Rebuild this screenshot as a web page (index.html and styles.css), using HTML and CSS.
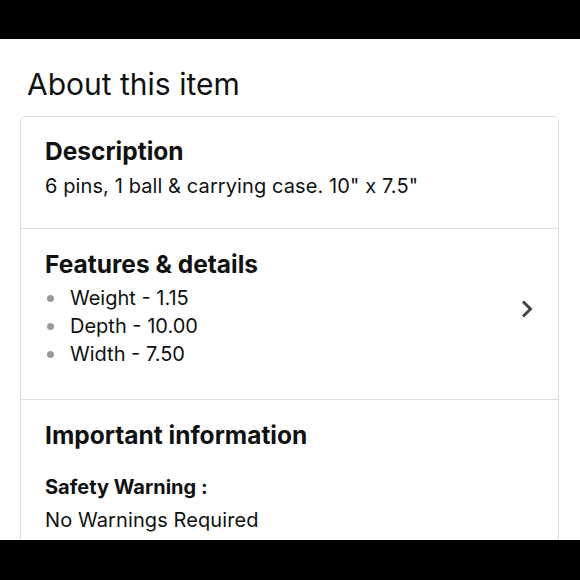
FILE: index.html
```html
<!DOCTYPE html>
<html lang="en">
<head>
    <meta charset="UTF-8">
    <meta name="viewport" content="width=device-width, initial-scale=1.0">
    <title>About this item</title>
    <link rel="stylesheet" href="styles.css">
</head>
<body>
    <div class="bar"></div>

    <main class="page">
        <h1 class="title">About this item</h1>

        <div class="card">
            <section class="section first">
                <h2>Description</h2>
                <p class="text">6 pins, 1 ball &amp; carrying case. 10" x 7.5"</p>
            </section>

            <section class="section link">
                <div>
                    <h2>Features &amp; details</h2>
                    <ul class="bullets">
                        <li>Weight - 1.15</li>
                        <li>Depth - 10.00</li>
                        <li>Width - 7.50</li>
                    </ul>
                </div>
                <svg class="chevron" width="14" height="20" viewBox="0 0 14 20">
                    <path d="M3 2.5 L10.5 10 L3 17.5" fill="none" stroke="#444" stroke-width="3"/>
                </svg>
            </section>

            <section class="section last">
                <h2>Important information</h2>
                <h3>Safety Warning :</h3>
                <p class="text">No Warnings Required</p>
            </section>
        </div>
    </main>

    <div class="bar bottom"></div>
</body>
</html>
```

FILE: styles.css
```css
* {
    margin: 0;
    padding: 0;
    box-sizing: border-box;
}

body {
    height: 580px;
    display: flex;
    flex-direction: column;
    overflow: hidden;
    background: #fff;
    color: #0f1111;
    font-family: Inter, Roboto, sans-serif;
}

.bar {
    height: 39px;
    background: #000;
    flex-shrink: 0;
}

.bar.bottom {
    height: 40px;
}

.page {
    flex: 1;
    overflow: hidden;
    padding: 27px 21px 0 20px;
}

.title {
    font-size: 30px;
    font-weight: 400;
    line-height: 36px;
    margin-left: 7px;
    margin-bottom: 14px;
}

.card {
    border: 1px solid #dcdede;
    border-radius: 5px;
}

.section {
    padding: 19px 24px 28px;
    border-bottom: 1px solid #dcdede;
}

.section.link {
    display: flex;
    align-items: center;
    justify-content: space-between;
    padding-top: 20px;
    padding-bottom: 31px;
}

.section.last {
    padding-top: 20px;
    border-bottom: none;
}

h2 {
    font-size: 24.5px;
    font-weight: 700;
    line-height: 30px;
    margin-bottom: 6px;
}

.link h2 {
    margin-bottom: 5px;
}

h3 {
    font-size: 20px;
    font-weight: 700;
    line-height: 26px;
    margin-top: 24px;
    margin-bottom: 6px;
}

.text {
    font-size: 20px;
    line-height: 28px;
    letter-spacing: 0.1px;
}

.bullets {
    list-style: none;
}

.bullets li {
    font-size: 20px;
    line-height: 28px;
    display: flex;
    align-items: center;
}

.bullets li::before {
    content: "";
    width: 7px;
    height: 7px;
    border-radius: 50%;
    background: #999;
    margin-left: 2px;
    margin-right: 16px;
}
```
